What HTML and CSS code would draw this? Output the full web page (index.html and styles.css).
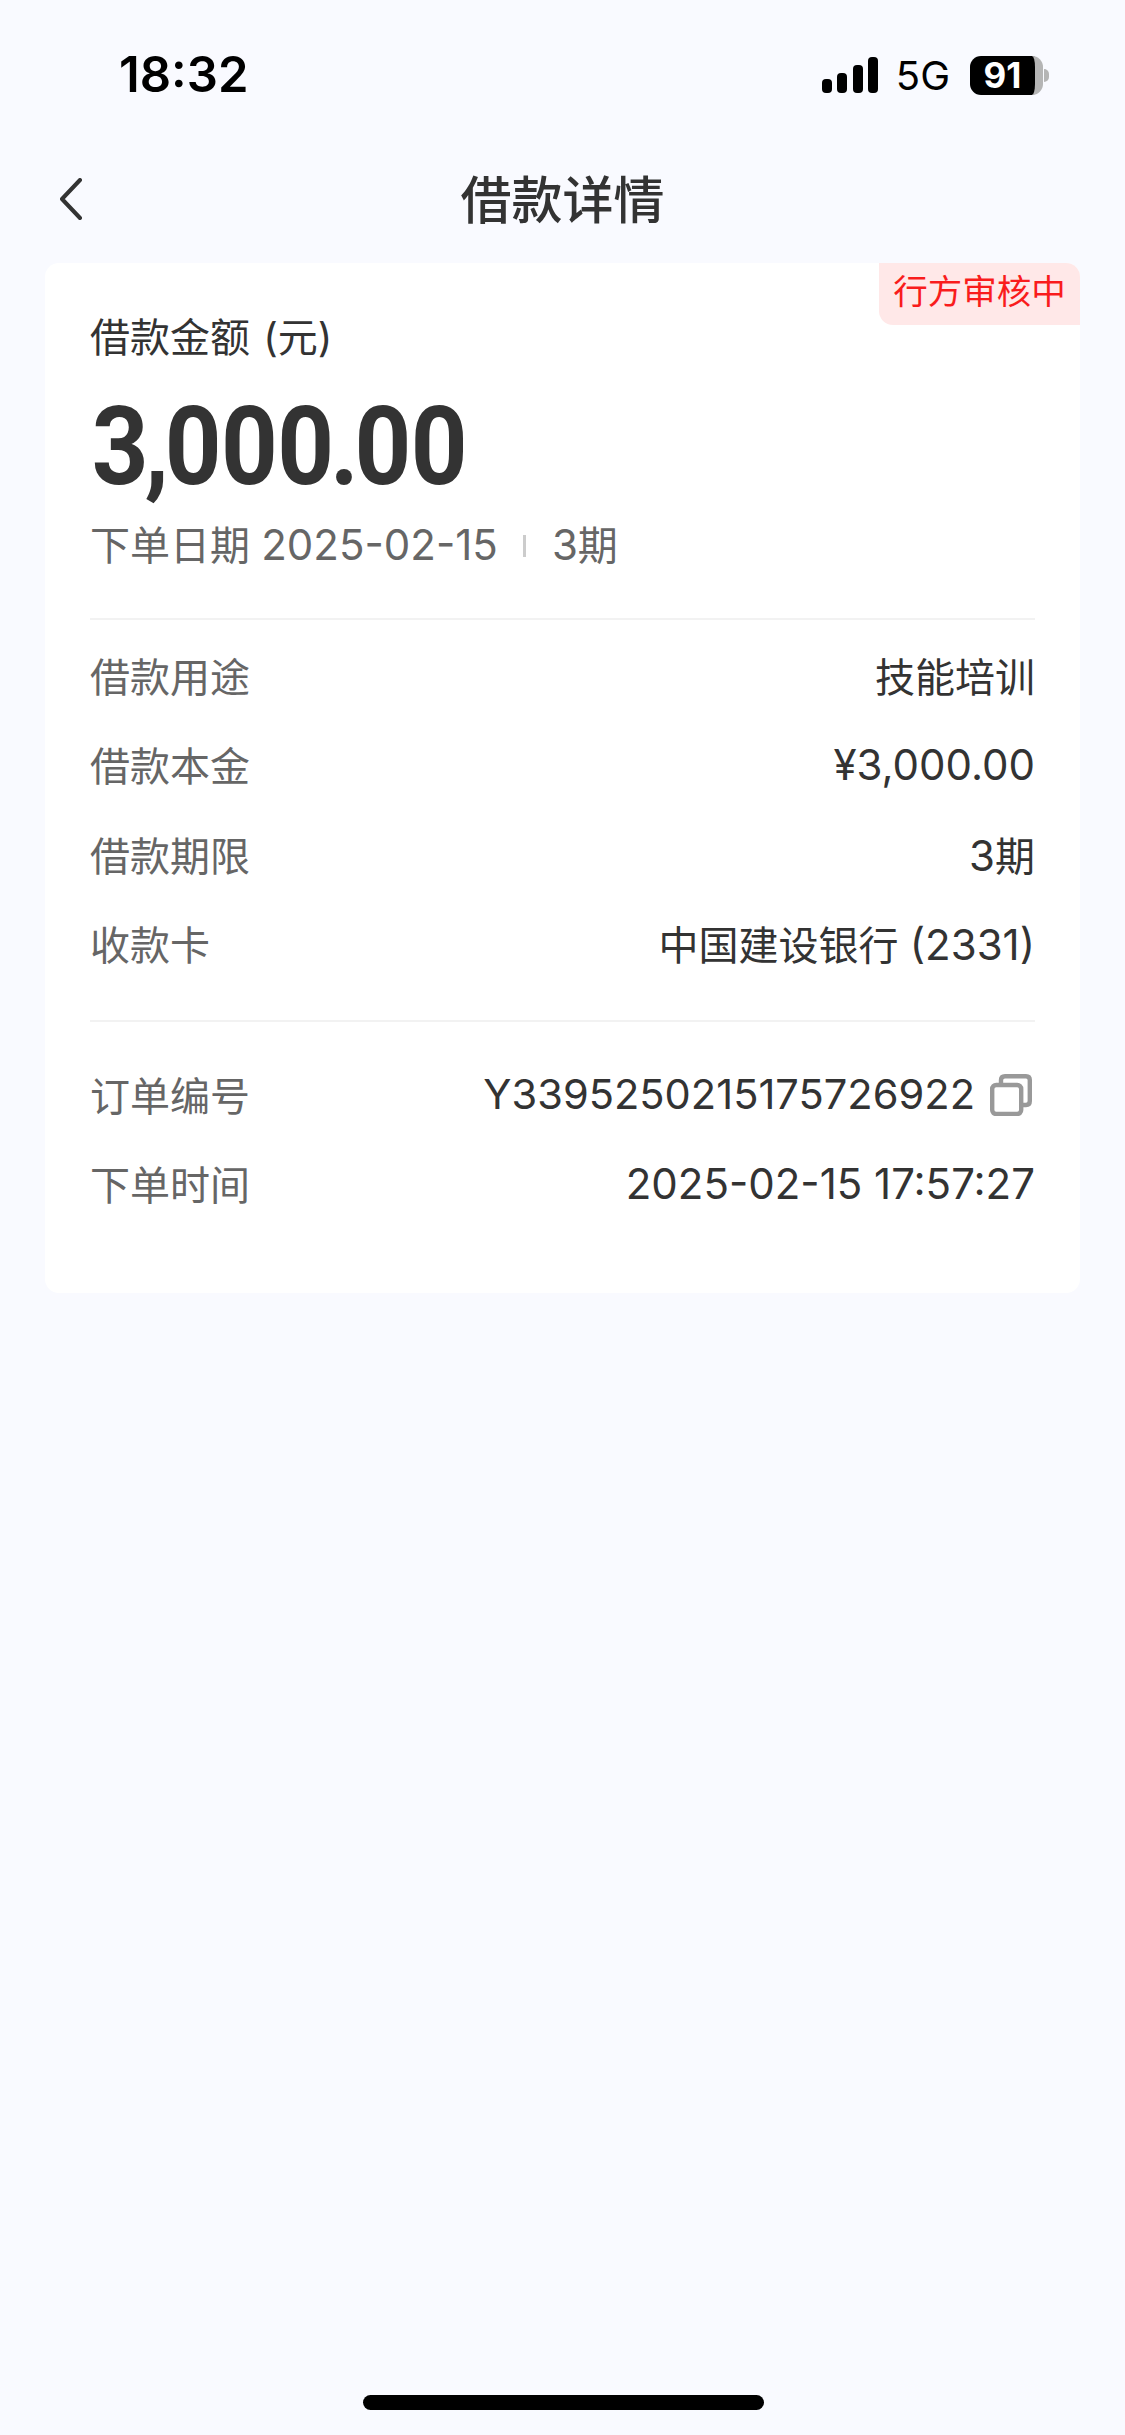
FILE: index.html
```html
<!DOCTYPE html>
<html lang="zh-Hans">
<head>
  <meta charset="UTF-8">
  <title>借款详情</title>
  <link rel="stylesheet" href="styles.css">
</head>
<body>

  <div class="statusbar">
    <span class="time">18:32</span>
    <div class="status-right">
      <svg class="signal" width="56" height="36" viewBox="0 0 56 36">
        <rect x="0" y="22" width="10" height="14" rx="4"/>
        <rect x="15" y="16" width="10" height="20" rx="4"/>
        <rect x="31" y="8" width="10" height="28" rx="4"/>
        <rect x="46" y="0" width="10" height="36" rx="4"/>
      </svg>
      <span class="net">5G</span>
      <div class="battery">
        <div class="battery-body"><span>91</span></div>
        <div class="battery-cap"></div>
      </div>
    </div>
  </div>

  <div class="navbar">
    <svg class="back" width="24" height="42" viewBox="0 0 24 42">
      <path d="M21 2 L3 21 L21 40" fill="none" stroke="#333" stroke-width="4" stroke-linecap="round" stroke-linejoin="round"/>
    </svg>
    <h1>借款详情</h1>
  </div>

  <div class="card">
    <div class="badge">行方审核中</div>

    <div class="label">借款金额 (元)</div>
    <div class="amount">3<span class="punct">,</span>000<span class="punct">.</span>00</div>
    <div class="meta">
      <span>下单日期 <span class="num">2025-02-15</span></span>
      <i class="meta-sep"></i>
      <span><span class="num">3</span>期</span>
    </div>

    <div class="group">
      <div class="row"><span>借款用途</span><b>技能培训</b></div>
      <div class="row"><span>借款本金</span><b class="num">¥3,000.00</b></div>
      <div class="row"><span>借款期限</span><b><span class="num">3</span>期</b></div>
      <div class="row"><span>收款卡</span><b>中国建设银行 <span class="num">(2331)</span></b></div>
    </div>

    <div class="group">
      <div class="row">
        <span>订单编号</span>
        <b class="order-no">
          <span class="num">Y3395250215175726922</span>
          <svg width="42" height="42" viewBox="0 0 42 42" fill="none" stroke="#999" stroke-width="4.4" stroke-linejoin="round">
            <rect x="2.2" y="11" width="29" height="29" rx="4"/>
            <path d="M11 11 V6 Q11 2.2 15 2.2 H36 Q39.8 2.2 39.8 6 V27 Q39.8 31 36 31 H31"/>
          </svg>
        </b>
      </div>
      <div class="row"><span>下单时间</span><b class="num">2025-02-15 17:57:27</b></div>
    </div>
  </div>

  <div class="home-bar"></div>

</body>
</html>
```

FILE: styles.css
```css
* {
  box-sizing: border-box;
}

body {
  margin: 0;
  height: 2435px;
  overflow: hidden;
  position: relative;
  background-color: #f9faff;
  color: #333;
  font-family: 'Inter', 'Noto Sans CJK SC', sans-serif;
}

.statusbar {
  height: 150px;
  padding: 48px 76px 0 119px;
  display: flex;
  justify-content: space-between;
  align-items: flex-start;
  color: #000;
}

.time {
  font-size: 49px;
  line-height: 54px;
  font-weight: 600;
}

.status-right {
  display: flex;
  align-items: center;
  height: 54px;
}

.signal {
  fill: #000;
  margin-right: 18px;
}

.net {
  font-size: 40px;
  font-weight: 400;
  margin-right: 20px;
}

.battery {
  display: flex;
  align-items: center;
}

.battery-body {
  width: 73px;
  height: 39px;
  background: #000;
  border-radius: 11px;
  border-right: 8px solid #b5b5b5;
  color: #fff;
  font-size: 35px;
  font-weight: 700;
  line-height: 39px;
  text-align: center;
}

.battery-cap {
  width: 5px;
  height: 13px;
  margin-left: 1px;
  background: #b5b5b5;
  border-radius: 0 7px 7px 0;
}

.navbar {
  height: 113px;
  padding-bottom: 20px;
  position: relative;
  display: flex;
  align-items: center;
  justify-content: center;
}

.navbar h1 {
  margin: 0;
  font-size: 51px;
  font-weight: 500;
  color: #333;
}

.back {
  position: absolute;
  left: 59px;
  top: 28px;
}

.card {
  position: relative;
  margin: 0 45px;
  height: 1030px;
  padding: 50px 45px 0;
  background: #fff;
  border-radius: 14px;
}

.badge {
  position: absolute;
  top: 0;
  right: 0;
  width: 201px;
  height: 62px;
  line-height: 58px;
  text-align: center;
  font-size: 34.5px;
  color: #f91c1c;
  background: #ffe8e8;
  border-radius: 0 14px 0 14px;
}

.label {
  font-size: 40px;
  line-height: 50px;
  word-spacing: 2px;
}

.amount {
  margin-top: 24px;
  padding-left: 2px;
  font-family: 'Roboto', sans-serif;
  font-size: 110px;
  font-weight: 700;
  line-height: 120px;
  letter-spacing: -0.6px;
  transform: scaleX(0.9);
  transform-origin: left center;
}

.punct {
  margin: 0 -4px;
}

.meta {
  margin-top: 13px;
  display: flex;
  align-items: center;
  color: #666;
  font-size: 40px;
  line-height: 50px;
}

.num {
  font-size: 42px;
}

.meta-sep {
  width: 3px;
  height: 22px;
  margin: 0 26px 0 25px;
  background: #ccc;
}

.group {
  border-top: 2px solid #f2f2f2;
  padding: 27px 0 32px;
}

.meta + .group {
  margin-top: 47px;
  padding-top: 10px;
}

.row {
  height: 89.5px;
  display: flex;
  justify-content: space-between;
  align-items: center;
  font-size: 40px;
  color: #666;
}

.row b {
  font-weight: 400;
  color: #333;
}

.order-no {
  display: flex;
  align-items: center;
  gap: 15px;
  padding-right: 3px;
}

.order-no .num {
  font-size: 41.6px;
}

.order-no svg {
  margin-top: 2px;
}

.home-bar {
  position: absolute;
  left: 363px;
  top: 2395px;
  width: 401px;
  height: 15px;
  background: #000;
  border-radius: 8px;
}
```
